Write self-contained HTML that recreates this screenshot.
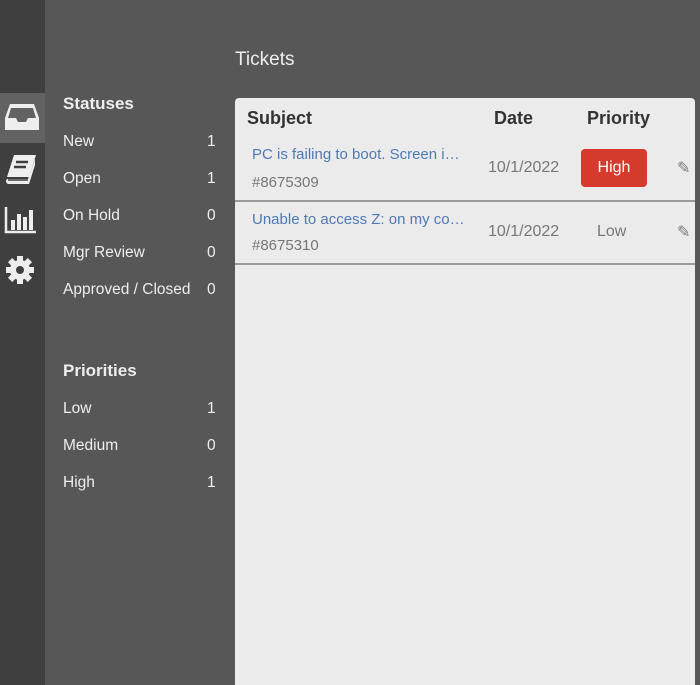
<!DOCTYPE html>
<html style="margin:0;width:700px;height:685px;overflow:hidden"><head><style>
body{margin:0;width:700px;height:685px;background:#575757;font-family:"Liberation Sans",sans-serif;position:relative;overflow:hidden}
.bar{position:absolute;left:0;top:0;width:45px;height:685px;background:#3f3f3f}
.act{position:absolute;left:0;top:93px;width:45px;height:50px;background:#626262}
.t{position:absolute;color:#eee;font-size:15.5px}
.h{font-weight:bold;font-size:17px}
.n{position:absolute;left:207px;color:#eee;font-size:15.5px}
.panel{position:absolute;left:235px;top:98px;width:460px;height:600px;background:#ebebeb;border-radius:4px}
.p{position:absolute;font-size:16px}
.hd{font-weight:bold;font-size:18px;color:#333}
.lnk{color:#4f79b6}
.gr{color:#777}
.line{position:absolute;left:0;width:460px;height:2px;background:#9a9a9a}
</style></head><body>
<div class="bar"></div><div class="act"></div>
<svg style="position:absolute;left:4px;top:101px" width="36" height="32" viewBox="0 0 36 32"><path d="M6 3h24l5 14v12H1V17z" fill="#eee"/><path d="M7 7h22l3 10h-8l-2 4h-8l-2-4H4z" fill="#626262"/></svg>
<svg style="position:absolute;left:4px;top:153px" width="34" height="34" viewBox="0 0 34 34"><path d="M10 2h22l-7 22H3z" fill="#eee"/><path d="M3 26h21l7-20v6l-6 19H4a3 3 0 0 1-1-5z" fill="#eee"/><path d="M4 27h20" stroke="#3f3f3f" stroke-width="1.5"/><path d="M12 9h12M10 14h12" stroke="#3f3f3f" stroke-width="2.5"/></svg>
<svg style="position:absolute;left:4px;top:206px" width="32" height="28" viewBox="0 0 32 28"><path d="M2 1v25h30" stroke="#eee" stroke-width="2.5" fill="none"/><rect x="7" y="14" width="4" height="10" fill="#eee"/><rect x="13" y="8" width="4" height="16" fill="#eee"/><rect x="19" y="11" width="4" height="13" fill="#eee"/><rect x="25" y="4" width="4" height="20" fill="#eee"/></svg>
<svg style="position:absolute;left:5px;top:255px" width="30" height="30" viewBox="0 0 30 30"><g fill="#eee"><circle cx="15" cy="15" r="10"/><rect x="12" y="1" width="6" height="28"/><rect x="12" y="1" width="6" height="28" transform="rotate(45 15 15)"/><rect x="12" y="1" width="6" height="28" transform="rotate(90 15 15)"/><rect x="12" y="1" width="6" height="28" transform="rotate(135 15 15)"/></g><circle cx="15" cy="15" r="4" fill="#3f3f3f"/></svg>
<div class="t" style="left:235px;top:49px;font-size:19px">Tickets</div>
<div class="t h" style="left:63px;top:94px">Statuses</div>
<div class="t" style="left:63px;top:133px">New</div><div class="n" style="top:133px">1</div>
<div class="t" style="left:63px;top:170px">Open</div><div class="n" style="top:170px">1</div>
<div class="t" style="left:63px;top:207px">On Hold</div><div class="n" style="top:207px">0</div>
<div class="t" style="left:63px;top:244px">Mgr Review</div><div class="n" style="top:244px">0</div>
<div class="t" style="left:63px;top:281px">Approved / Closed</div><div class="n" style="top:281px">0</div>
<div class="t h" style="left:63px;top:361px">Priorities</div>
<div class="t" style="left:63px;top:400px">Low</div><div class="n" style="top:400px">1</div>
<div class="t" style="left:63px;top:437px">Medium</div><div class="n" style="top:437px">0</div>
<div class="t" style="left:63px;top:474px">High</div><div class="n" style="top:474px">1</div>
<div class="panel">
<div class="p hd" style="left:12px;top:10px">Subject</div>
<div class="p hd" style="left:259px;top:10px">Date</div>
<div class="p hd" style="left:352px;top:10px">Priority</div>
<div class="p lnk" style="left:17px;top:48px;font-size:15px">PC is failing to boot. Screen i…</div>
<div class="p gr" style="left:17px;top:76px;font-size:15px">#8675309</div>
<div class="p gr" style="left:253px;top:61px">10/1/2022</div>
<div style="position:absolute;left:346px;top:51px;width:66px;height:38px;background:#d63a2c;border-radius:4px;color:#fff;font-size:16px;text-align:center;line-height:38px">High</div>
<div class="p gr" style="left:442px;top:60px">✎</div>
<div class="line" style="top:102px"></div>
<div class="p lnk" style="left:17px;top:113px;font-size:15px">Unable to access Z: on my co…</div>
<div class="p gr" style="left:17px;top:139px;font-size:15px">#8675310</div>
<div class="p gr" style="left:253px;top:125px">10/1/2022</div>
<div class="p gr" style="left:362px;top:125px">Low</div>
<div class="p gr" style="left:442px;top:124px">✎</div>
<div class="line" style="top:165px"></div>
</div>
</body></html>
